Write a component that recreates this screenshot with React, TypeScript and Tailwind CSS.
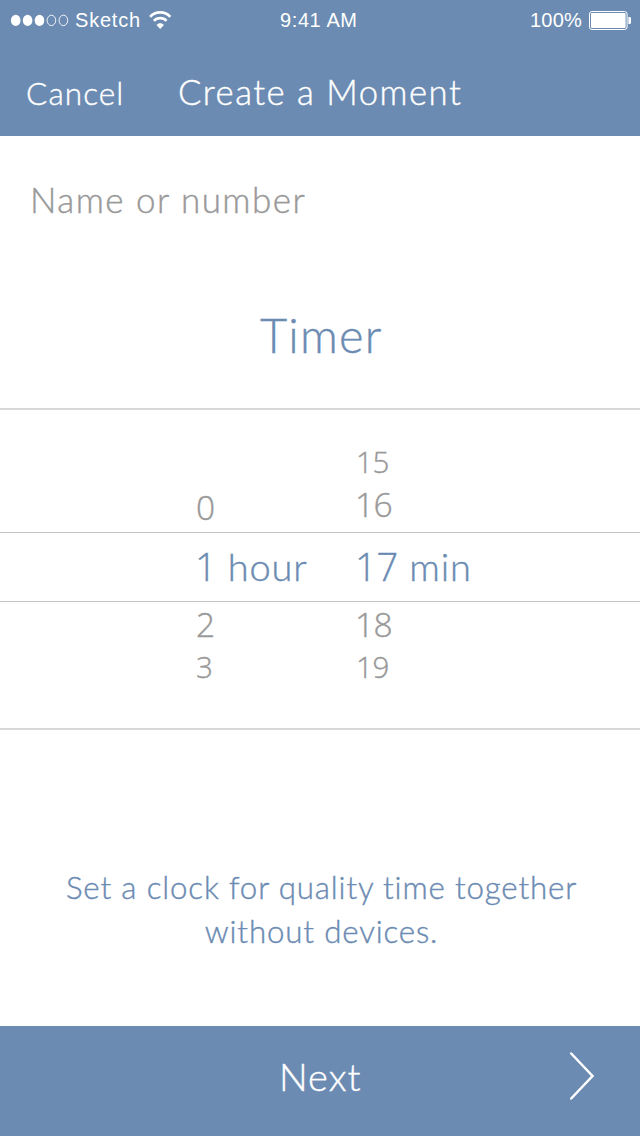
import type { ReactNode } from 'react';

const digits = "font-['Open_Sans',sans-serif]";

function StatusBar() {
  return (
    <div className="flex h-10 items-center font-['Liberation_Sans',sans-serif] text-[20px] leading-10">
      <svg className="ml-[10px] shrink-0" width="60" height="14" viewBox="0 0 60 14" fill="white">
        <ellipse cx="5.7" cy="7.4" rx="4.8" ry="5.6" />
        <ellipse cx="17.6" cy="7.4" rx="4.8" ry="5.6" />
        <ellipse cx="29.5" cy="7.4" rx="4.8" ry="5.6" />
        <ellipse cx="41.4" cy="7.4" rx="4.3" ry="5.2" fill="none" stroke="white" strokeWidth="0.9" />
        <ellipse cx="53.4" cy="7.4" rx="4.3" ry="5.2" fill="none" stroke="white" strokeWidth="0.9" />
      </svg>
      <span className="ml-[5px] w-[72px] tracking-[0.8px]">Sketch</span>
      <svg className="shrink-0" width="26" height="20" viewBox="0 0 26 20" fill="none" stroke="white" strokeWidth="2.7">
        <path d="M3.1 6.9 C8.3 0.9 18.1 0.9 23.3 6.9" />
        <path d="M6.9 10.9 C10.2 7.3 16.2 7.3 19.5 10.9" />
        <path d="M13.2 19.1 L9.5 15 C11.4 12.6 15 12.6 16.9 15 Z" fill="white" stroke="none" />
      </svg>
      <span className="ml-[107px] w-[80px] tracking-[0.6px]">9:41 AM</span>
      <span className="ml-auto tracking-[0.2px]">100%</span>
      <svg className="mr-[8px] ml-[6px] shrink-0" width="44" height="20" viewBox="0 0 44 20">
        <rect x="1.5" y="1.5" width="37.6" height="18" rx="2.5" fill="none" stroke="white" strokeWidth="1" />
        <rect x="3" y="3" width="34.6" height="15" rx="1" fill="white" />
        <path d="M40.4 7 H41.8 Q43 7 43 8.2 V12.8 Q43 14 41.8 14 H40.4 Z" fill="white" />
      </svg>
    </div>
  );
}

function Option({ className, children }: { className: string; children: ReactNode }) {
  return <li className={`${digits} ${className}`}>{children}</li>;
}

function Picker() {
  return (
    <section className="h-[322px] border-y-2 border-[#d8d8d8] text-[#999]">
      <div className="grid h-[122px] grid-cols-[159px_1fr] items-end pl-[196px]">
        <ul className="pb-1">
          <Option className="text-[33.5px] leading-[42px]">0</Option>
        </ul>
        <ul className="pb-[7px]">
          <Option className="pl-px text-[29.5px] leading-[42px] tracking-[-0.3px]">15</Option>
          <Option className="text-[33.5px] leading-[42px] tracking-[-0.6px]">16</Option>
        </ul>
      </div>
      <div className="grid h-[70px] grid-cols-[160px_1fr] items-center border-y border-[#c4c4c4] pb-[3px] pl-[195px] text-[38px] leading-[50px] text-[#6b8bb2]">
        <p>
          <span className={digits}>1</span>
          <span className="tracking-[0.8px]"> hour</span>
        </p>
        <p>
          <span className={`${digits} tracking-[-0.2px]`}>17</span>
          <span className="tracking-[0.9px]"> min</span>
        </p>
      </div>
      <div className="grid grid-cols-[159px_1fr] pt-px pl-[196px]">
        <ul>
          <Option className="text-[33.5px] leading-[42px]">2</Option>
          <Option className="text-[29.5px] leading-[44px]">3</Option>
        </ul>
        <ul>
          <Option className="text-[33.5px] leading-[42px] tracking-[-0.6px]">18</Option>
          <Option className="pl-px text-[29.5px] leading-[44px] tracking-[-0.3px]">19</Option>
        </ul>
      </div>
    </section>
  );
}

export default function App() {
  return (
    <div className="flex h-[1136px] w-[640px] flex-col overflow-hidden bg-white font-['Lato',sans-serif] font-light whitespace-nowrap">
      <header className="h-[136px] bg-[#6b8bb2] text-white">
        <StatusBar />
        <nav className="flex items-baseline pt-[31px] pl-[26px] [-webkit-text-stroke:0.4px]">
          <button className="w-[152px] text-left text-[31.5px] leading-[42px] tracking-[1.1px]">Cancel</button>
          <h1 className="text-[34.7px] leading-[42px] tracking-[1.5px]">Create a Moment</h1>
        </nav>
      </header>
      <main className="flex flex-1 flex-col [-webkit-text-stroke:0.4px]">
        <div className="flex h-[125px] items-center pt-[2px] pl-[30px] text-[35px] tracking-[1.45px] text-[#999]">Name or number</div>
        <h2 className="h-[147px] pl-[260px] text-[47px] leading-[148px] tracking-[1.2px] text-[#6b8bb2]">Timer</h2>
        <Picker />
        <p className="pt-[135px] pl-[3px] text-center text-[31.3px] leading-[44px] tracking-[0.84px] text-[#6b8bb2]">
          Set a clock for quality time together
          <br />
          without devices.
        </p>
      </main>
      <footer className="flex h-[110px] items-center bg-[#6b8bb2] text-white">
        <button className="w-[290px] pb-[10px] pl-[279px] text-left text-[38px] leading-[50px] tracking-[1px] [-webkit-text-stroke:0.4px]">Next</button>
        <svg className="mb-[10px] ml-auto mr-[43px] shrink-0" width="28" height="50" viewBox="0 0 28 50" fill="none" stroke="white" strokeWidth="2.5" strokeLinecap="round">
          <path d="M2.2 2.5 L23.5 25 L2.2 47.5" />
        </svg>
      </footer>
    </div>
  );
}
